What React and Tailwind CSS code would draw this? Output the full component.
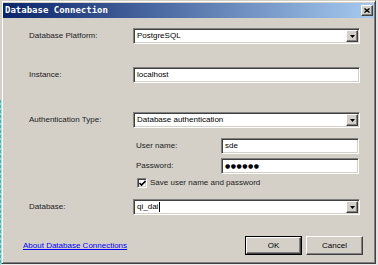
import React from "react";

const ui = { fontFamily: '"Liberation Sans", Arial, sans-serif' };

// sunken 3D field border, windows classic style
const sunken =
  "border border-t-[#808080] border-l-[#808080] border-b-white border-r-white shadow-[inset_1px_1px_0_#404040,inset_-1px_-1px_0_#d4d0c8] bg-white";

const raised =
  "border border-t-white border-l-white border-b-[#404040] border-r-[#404040] shadow-[inset_-1px_-1px_0_#808080] bg-[#d4d0c8]";

const DropButton = () => (
  <div className={`w-[12px] h-full ${raised} flex items-center justify-center`}>
    <svg width="5" height="3" viewBox="0 0 5 3">
      <path d="M0 0H5L2.5 3Z" fill="#000" />
    </svg>
  </div>
);

const Select = ({ value, caret }) => (
  <div className={`h-[16px] w-[227px] ${sunken} flex items-stretch p-[1px]`}>
    <div className="flex-1 flex items-center pl-[2px] text-[8px] text-black leading-none">
      {value}
      {caret && <span className="w-px h-[10px] bg-black ml-px" />}
    </div>
    <DropButton />
  </div>
);

const Input = ({ value, className }) => (
  <div
    className={`h-[16px] ${sunken} flex items-center pl-[3px] text-[8px] text-black leading-none ${className}`}
  >
    {value}
  </div>
);

const Label = ({ children }) => (
  <div className="w-[130px] shrink-0 pl-[26px] text-[8px] text-[#222] leading-none">{children}</div>
);

export default function App() {
  return (
    <div className="w-[378px] h-[265px] bg-[#ececec] flex overflow-hidden" style={ui}>
      <div className="w-px flex flex-col">
        <div className="h-[100px] bg-[#d4d0c8]" />
        <div className="flex-1 bg-[repeating-linear-gradient(180deg,#19c8c8_0_3px,#8fe0e0_3px_5px)]" />
      </div>

      <div className="w-[375px] h-[264px] bg-[#d4d0c8] border border-t-[#d4d0c8] border-l-[#d4d0c8] border-b-[#404040] border-r-[#404040] shadow-[inset_1px_1px_0_#fff,inset_-1px_-1px_0_#808080] p-[1px] flex flex-col">
        {/* title bar */}
        <div className="mt-[1px] h-[15px] bg-[linear-gradient(90deg,#0a246a,#a6caf0)] flex items-center justify-between pl-[2px] pr-[1px]">
          <span
            className="text-[9px] font-bold text-white leading-none"
            style={{ fontFamily: '"DejaVu Sans Mono", monospace' }}
          >
            Database Connection
          </span>
          <div className={`w-[12px] h-[11px] ${raised} flex items-center justify-center`}>
            <svg width="6" height="5" viewBox="0 0 6 5">
              <path d="M0.5 0.5L5.5 4.5M5.5 0.5L0.5 4.5" stroke="#000" strokeWidth="1.4" />
            </svg>
          </div>
        </div>

        <div className="flex items-center mt-[10px]">
          <Label>Database Platform:</Label>
          <Select value="PostgreSQL" />
        </div>

        <div className="flex items-center mt-[23px]">
          <Label>Instance:</Label>
          <Input value="localhost" className="w-[227px]" />
        </div>

        <div className="flex items-center mt-[29px]">
          <Label>Authentication Type:</Label>
          <Select value="Database authentication" />
        </div>

        <div className="flex items-center mt-[10px] pl-[133px]">
          <div className="w-[85px] text-[8px] text-[#222] leading-none">User name:</div>
          <Input value="sde" className="w-[138px]" />
        </div>

        <div className="flex items-center mt-[4px] pl-[133px]">
          <div className="w-[85px] text-[8px] text-[#222] leading-none">Password:</div>
          <Input
            value={
              <span
                className="text-[6px] tracking-[0.5px]"
                style={{ fontFamily: '"DejaVu Sans", sans-serif' }}
              >
                ●●●●●●
              </span>
            }
            className="w-[138px]"
          />
        </div>

        <div className="flex items-center mt-[4px] pl-[134px] h-[10px]">
          <div className={`w-[10px] h-[10px] ${sunken} flex items-center justify-center`}>
            <svg width="7" height="7" viewBox="0 0 7 7">
              <path d="M0.5 3L2.5 5L6.5 1" stroke="#000" strokeWidth="1.6" fill="none" />
            </svg>
          </div>
          <span className="ml-[3px] text-[8px] text-[#222] leading-none">
            Save user name and password
          </span>
        </div>

        <div className="flex items-center mt-[11px]">
          <Label>Database:</Label>
          <Select value="qi_dai" caret />
        </div>

        <div className="flex items-center mt-[21px]">
          <a className="ml-[20px] text-[8px] text-[#0000ff] underline leading-none">
            About Database Connections
          </a>
          <div className="ml-auto flex gap-[4px] mr-[11px]">
            <div className="w-[57px] h-[19px] border border-black">
              <div className={`w-full h-full ${raised} flex items-center justify-center text-[8px] text-black leading-none`}>
                OK
              </div>
            </div>
            <div className={`w-[57px] h-[19px] ${raised} flex items-center justify-center text-[8px] text-black leading-none`}>
              Cancel
            </div>
          </div>
        </div>
      </div>

      <div className="w-[2px] bg-[#e4e4e4]" />
    </div>
  );
}
